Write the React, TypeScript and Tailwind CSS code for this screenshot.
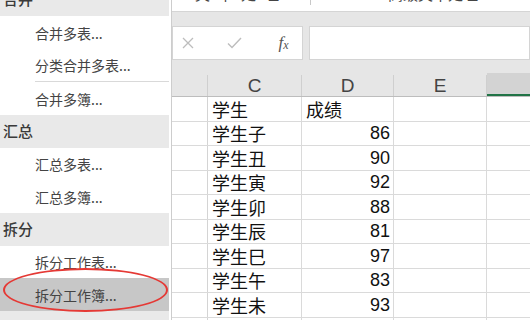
import React from 'react';

const cjk = { fontFamily: '"Noto Sans CJK SC", "Noto Sans", sans-serif' };
const latin = { fontFamily: '"Liberation Sans", "Noto Sans CJK SC", sans-serif' };

function GroupHeader({ label }: { label: string }) {
  return (
    <div className="h-[33px] shrink-0 bg-[#e9e9e9] flex items-center pl-[3px] text-[15px] font-medium text-[#3a3a3a]">
      {label}
    </div>
  );
}

function MenuItem({ label, active }: { label: string; active?: boolean }) {
  return (
    <div
      className={`h-[32.5px] shrink-0 flex items-center pl-[35px] pt-[2px] text-[14px] text-[#444] ${
        active ? 'bg-[#c7c7c7]' : ''
      }`}
    >
      {label}
    </div>
  );
}

const rows: [string, string][] = [
  ['学生', '成绩'],
  ['学生子', '86'],
  ['学生丑', '90'],
  ['学生寅', '92'],
  ['学生卯', '88'],
  ['学生辰', '81'],
  ['学生巳', '97'],
  ['学生午', '83'],
  ['学生未', '93'],
  ['', ''],
];

function SidePanel() {
  return (
    <div className="relative w-[169px] shrink-0 h-full overflow-hidden bg-white">
      <div className="flex flex-col mt-[-17px]">
        <GroupHeader label="合并" />
        <MenuItem label="合并多表..." />
        <MenuItem label="分类合并多表..." />
        <div className="h-px shrink-0 ml-[35px] bg-[#d9d9d9]" />
        <MenuItem label="合并多簿..." />
        <GroupHeader label="汇总" />
        <MenuItem label="汇总多表..." />
        <MenuItem label="汇总多簿..." />
        <GroupHeader label="拆分" />
        <MenuItem label="拆分工作表..." />
        <MenuItem label="拆分工作簿..." active />
        <GroupHeader label="文档工具" />
      </div>
      {/* red annotation ring */}
      <div className="absolute left-[3px] top-[268px] w-[165px] h-[44px] rounded-[50%] border-2 border-[#e53935]" />
    </div>
  );
}

function FormulaBar() {
  return (
    <div className="h-[34px] shrink-0 flex gap-[6px]">
      <div className="w-[131px] shrink-0 bg-white border border-[#d4d4d4] flex items-center">
        <div className="w-[30px] flex justify-center">
          <svg width="12" height="12" viewBox="0 0 12 12">
            <path d="M1 1L11 11M11 1L1 11" stroke="#bdbdbd" strokeWidth="1.3" fill="none" />
          </svg>
        </div>
        <div className="w-[62px] flex justify-center">
          <svg width="15" height="12" viewBox="0 0 15 12">
            <path d="M1 6.5L5 10.5L14 1" stroke="#bdbdbd" strokeWidth="1.4" fill="none" />
          </svg>
        </div>
        <div
          className="flex-1 flex justify-center items-end italic text-[#555] pb-[2px]"
          style={{ fontFamily: '"Liberation Serif", serif' }}
        >
          <span className="text-[17px] leading-none">f</span>
          <span className="text-[12px] leading-none">x</span>
        </div>
      </div>
      <div className="flex-1 bg-white border border-[#d4d4d4]" />
    </div>
  );
}

function Sheet() {
  return (
    <div className="flex flex-col">
      {/* column header row */}
      <div className="h-[22px] shrink-0 flex bg-[#e6e6e6] border-b border-[#bdbdbd] text-[19px] text-[#444]" style={latin}>
        <div className="w-[36px] shrink-0 border-r border-[#cfcfcf]" />
        <div className="w-[94px] shrink-0 border-r border-[#cfcfcf] flex items-center justify-center pt-[2px]">C</div>
        <div className="w-[92px] shrink-0 border-r border-[#cfcfcf] flex items-center justify-center pt-[2px]">D</div>
        <div className="w-[93px] shrink-0 border-r border-[#cfcfcf] flex items-center justify-center pt-[2px]">E</div>
        <div className="flex-1 bg-[#d3d3d3] border-b-2 border-[#217346] mt-[-2px]" />
      </div>
      {rows.map(([name, score], i) => (
        <div key={i} className="h-[24.5px] shrink-0 flex border-b border-[#dadada] text-[18px] text-[#111]">
          <div className="w-[36px] shrink-0 border-r border-[#d4d4d4]" />
          <div className="w-[94px] shrink-0 border-r border-[#dadada] flex items-center pl-[4px] pt-[1px]" style={cjk}>
            {name}
          </div>
          <div
            className={`w-[92px] shrink-0 border-r border-[#dadada] flex items-center pt-[1px] ${
              i === 0 ? 'pl-[4px]' : 'justify-end pr-[3px]'
            }`}
            style={i === 0 ? cjk : latin}
          >
            {score}
          </div>
          <div className="w-[93px] shrink-0 border-r border-[#dadada]" />
          <div className="flex-1" />
        </div>
      ))}
    </div>
  );
}

export default function App() {
  return (
    <div className="w-[530px] h-[320px] overflow-hidden flex bg-white" style={cjk}>
      <SidePanel />
      <div className="w-[2px] shrink-0 bg-white" />
      <div className="w-px shrink-0 bg-[#cdcdcd]" />
      <div className="flex-1 flex flex-col min-w-0 overflow-hidden">
        {/* ribbon group labels (clipped) */}
        <div className="h-[12px] shrink-0 flex bg-white border-b border-[#d5d5d5] overflow-hidden text-[15px] text-[#444]">
          <div className="w-[138px] shrink-0 flex justify-center tracking-[8px] mt-[-14px] leading-[15px]">文本处理</div>
          <div className="w-px h-[5px] shrink-0 bg-[#c8c8c8]" />
          <div className="flex-1 flex pl-[77px] mt-[-14px] leading-[15px] whitespace-nowrap">高级文本处理</div>
        </div>
        <div className="flex-1 flex flex-col bg-[#e6e6e6]">
          <div className="h-[14px] shrink-0" />
          <FormulaBar />
          <div className="h-[15px] shrink-0" />
          <div className="flex-1 bg-white">
            <Sheet />
          </div>
        </div>
      </div>
    </div>
  );
}
